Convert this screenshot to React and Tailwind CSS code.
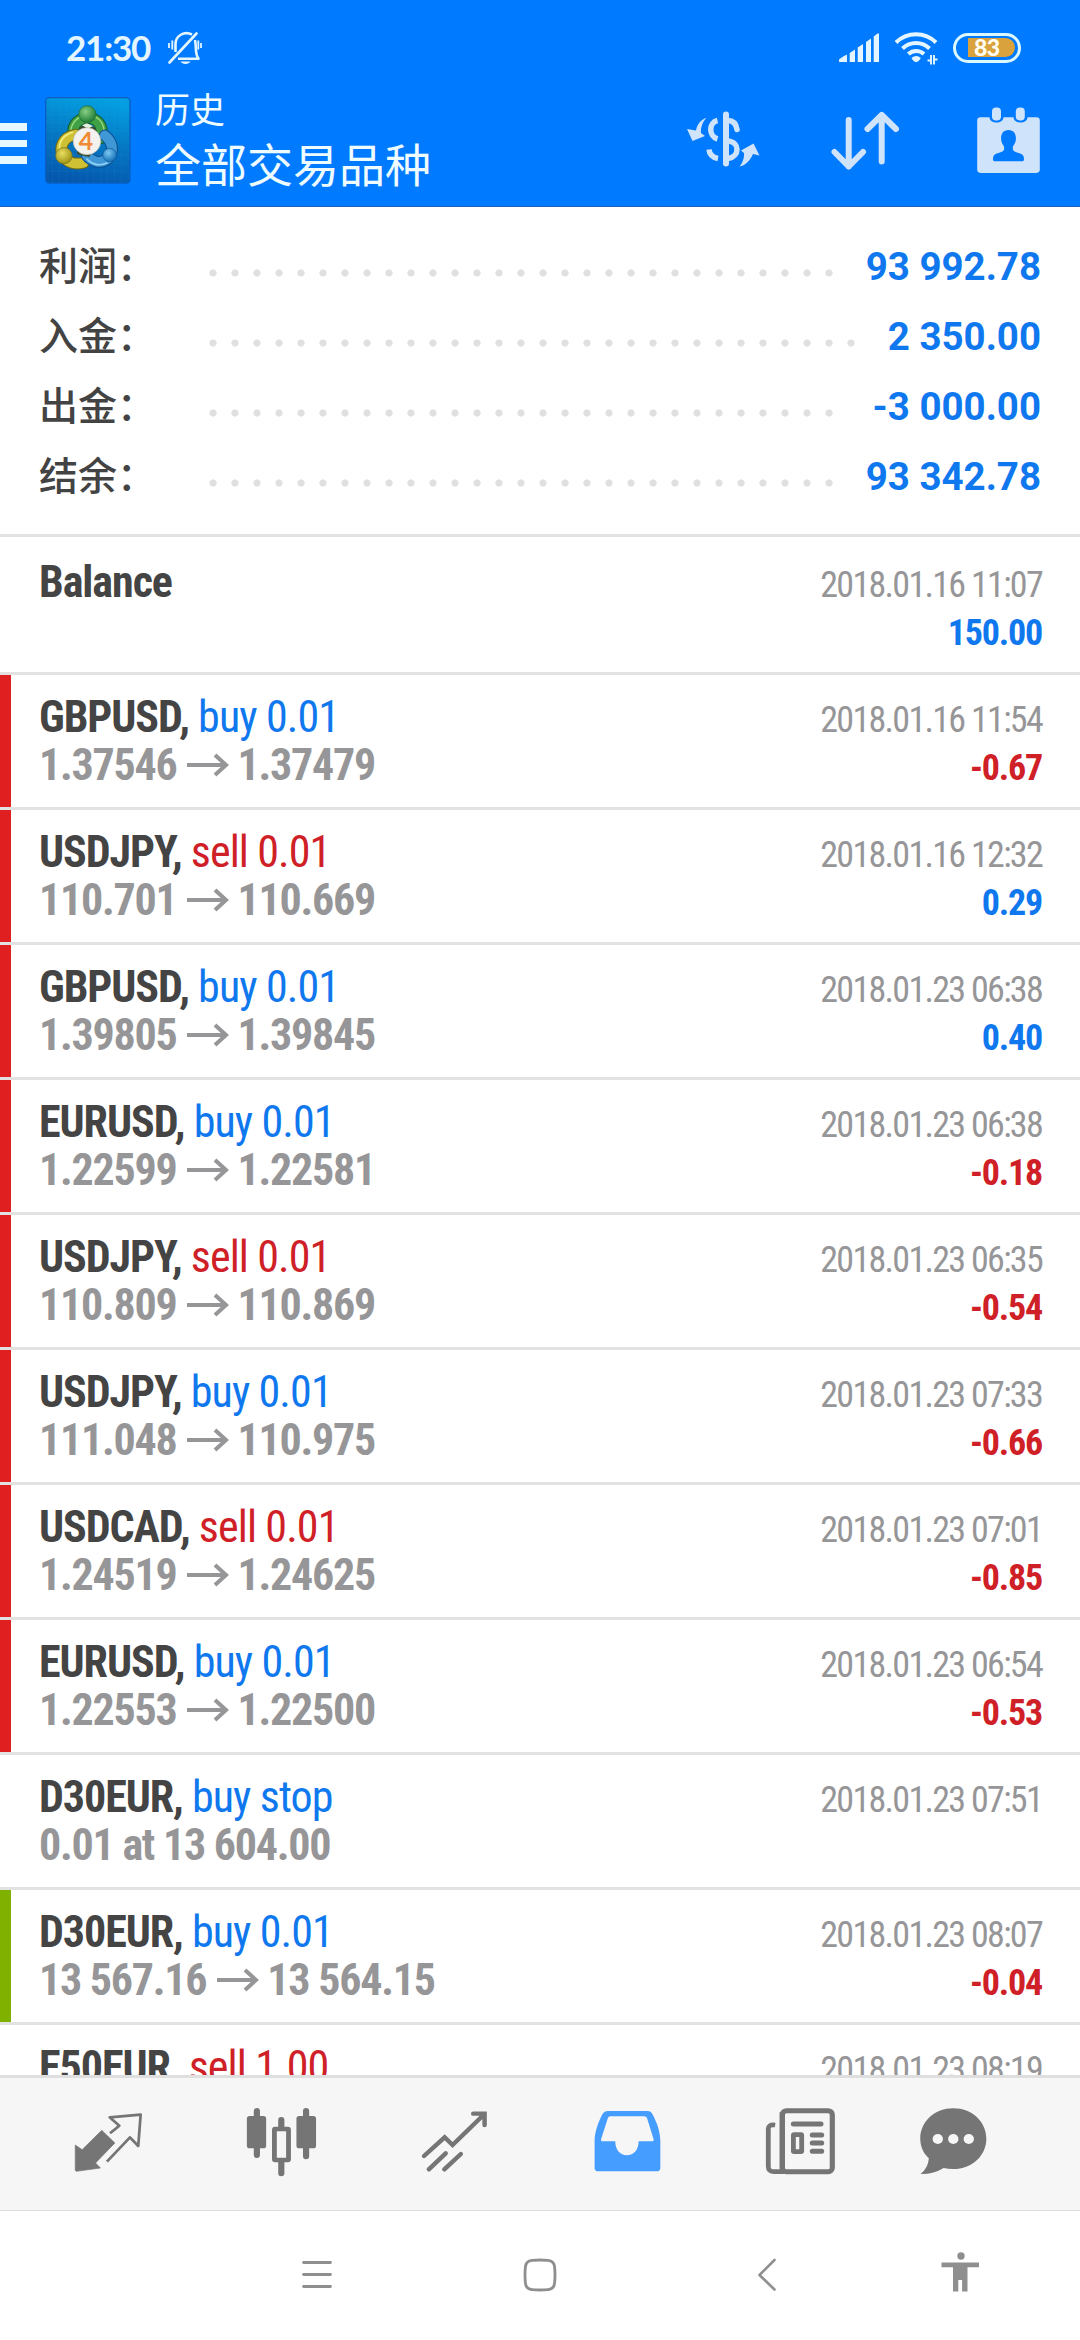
const summary = [
  { label: '利润：', value: '93 992.78' },
  { label: '入金：', value: '2 350.00' },
  { label: '出金：', value: '-3 000.00' },
  { label: '结余：', value: '93 342.78' },
]

const deals = [
  { symbol: 'Balance', time: '2018.01.16 11:07', profit: '150.00' },
  { symbol: 'GBPUSD', side: 'buy', volume: '0.01', from: '1.37546', to: '1.37479', time: '2018.01.16 11:54', profit: '-0.67', mark: 'red' },
  { symbol: 'USDJPY', side: 'sell', volume: '0.01', from: '110.701', to: '110.669', time: '2018.01.16 12:32', profit: '0.29', mark: 'red' },
  { symbol: 'GBPUSD', side: 'buy', volume: '0.01', from: '1.39805', to: '1.39845', time: '2018.01.23 06:38', profit: '0.40', mark: 'red' },
  { symbol: 'EURUSD', side: 'buy', volume: '0.01', from: '1.22599', to: '1.22581', time: '2018.01.23 06:38', profit: '-0.18', mark: 'red' },
  { symbol: 'USDJPY', side: 'sell', volume: '0.01', from: '110.809', to: '110.869', time: '2018.01.23 06:35', profit: '-0.54', mark: 'red' },
  { symbol: 'USDJPY', side: 'buy', volume: '0.01', from: '111.048', to: '110.975', time: '2018.01.23 07:33', profit: '-0.66', mark: 'red' },
  { symbol: 'USDCAD', side: 'sell', volume: '0.01', from: '1.24519', to: '1.24625', time: '2018.01.23 07:01', profit: '-0.85', mark: 'red' },
  { symbol: 'EURUSD', side: 'buy', volume: '0.01', from: '1.22553', to: '1.22500', time: '2018.01.23 06:54', profit: '-0.53', mark: 'red' },
  { symbol: 'D30EUR', side: 'buy', volume: 'stop', note: '0.01 at 13 604.00', time: '2018.01.23 07:51' },
  { symbol: 'D30EUR', side: 'buy', volume: '0.01', from: '13 567.16', to: '13 564.15', time: '2018.01.23 08:07', profit: '-0.04', mark: 'green' },
  { symbol: 'E50EUR', side: 'sell', volume: '1.00', time: '2018.01.23 08:19' },
]

const markColors = { red: 'bg-[#e02020]', green: 'bg-[#80b000]' }

function StatusBar() {
  return (
    <div className="flex h-[87px] items-center pt-2 pl-[66px] pr-[59px] text-[#e3f6ff]">
      <span className="w-[85px] font-['Lato',sans-serif] text-[35px] leading-none font-bold tracking-[-1.2px]">21:30</span>
      <svg className="ml-[17px]" width="34" height="34" viewBox="168 30 34 34" fill="none" stroke="currentColor" strokeWidth="2.6">
        <path d="M169.500 61.500 196.500 32.500" strokeLinecap="round" />
        <path d="M192 33.500C184 29.500 175.500 35 175.500 43v8" />
        <path d="M195 39c1.800 8-.5 13 3.500 18.800H178" strokeLinejoin="round" />
        <path d="M180.500 60.500h10c-1.500 3.200-8.500 3.200-10 0z" fill="currentColor" stroke="none" />
        <path d="M169 42v5M172.300 39.500v9M198.300 39.500v9M201 42v5" strokeWidth="1.800" />
      </svg>
      <svg className="ml-auto" width="42" height="32" viewBox="837 31 42 32" fill="currentColor">
        <path d="M838 61v-2q0-1.500 8-5.500v7.500zM848.700 52l5.300-3.400V61h-5.300zM856.700 46.500l5.300-3.500V61h-5.300zM865 41l5-3.500V61h-5zM872.700 35.500 876.500 32.500 878 32.500V61h-5.300z" />
      </svg>
      <svg className="ml-[14px]" width="45" height="36" viewBox="893 30 45 36" fill="none" stroke="currentColor" strokeWidth="4">
        <path d="M895 42.500C906 31.500 924 31.500 935 42.500M901.500 48.500c7.500-7.300 19.500-7.300 27 0M907.300 54c4.600-4 11.200-4 15.700 0" />
        <path d="M910.500 58c3-2.800 6.500-2.800 9.300 0-1 2-2.800 4-4.700 4s-3.700-2-4.600-4z" fill="currentColor" stroke="none" />
        <path d="M926.500 60.500h3.500V55M930 55v9.500M933 55v9.500M933 59.500h3.500" strokeWidth="1.900" />
      </svg>
      <div className="ml-[14px] flex h-[30px] w-[68px] items-center justify-end rounded-full border-[3px] border-[#dcf8ff] pr-[3px]">
        <div className="flex h-[19px] w-[47px] items-center rounded-r-full rounded-l-[2px] bg-[#d9a23c] pl-[6px] font-['Lato',sans-serif] text-[23px] leading-none font-black tracking-[-0.5px] text-[#fffdf2]">
          83
        </div>
      </div>
    </div>
  )
}

function Logo() {
  return (
    <svg className="ml-[18px]" width="86" height="87" viewBox="132 294 250 258" preserveAspectRatio="none">
      <defs>
        <linearGradient id="tile" x1="0.600" y1="0" x2="0.400" y2="1">
          <stop offset="0" stopColor="#049fe2" />
          <stop offset="0.550" stopColor="#0573bf" />
          <stop offset="1" stopColor="#0557ad" />
        </linearGradient>
        <radialGradient id="green" cx="0.400" cy="0.350" r="0.650">
          <stop offset="0" stopColor="#86d084" />
          <stop offset="1" stopColor="#217d36" />
        </radialGradient>
        <radialGradient id="yellow" cx="0.400" cy="0.350" r="0.650">
          <stop offset="0" stopColor="#e8dd5e" />
          <stop offset="1" stopColor="#a09418" />
        </radialGradient>
        <radialGradient id="blue" cx="0.400" cy="0.350" r="0.650">
          <stop offset="0" stopColor="#7cc8f2" />
          <stop offset="1" stopColor="#1672b8" />
        </radialGradient>
      </defs>
      <rect x="134" y="296" width="245" height="253" rx="10" fill="url(#tile)" stroke="#0a5fc0" strokeWidth="4" />
      <path d="M154 297v252M174 297v252M194 297v252M214 297v252M234 297v252M254 297v252M274 297v252M294 297v252M314 297v252M334 297v252M354 297v252M135 322h243M135 346h243M135 370h243M135 394h243M135 418h243M135 442h243M135 466h243M135 490h243M135 514h243" stroke="#37b6ee" strokeOpacity="0.150" strokeWidth="2" />
      <g fill="none" strokeLinecap="round">
        <path d="M214 404C212 374 230 358 255 356 282 356 302 376 297 415" stroke="#155c2c" strokeWidth="35" />
        <path d="M214 404C212 374 230 358 255 356 282 356 302 376 297 415" stroke="#3fa045" strokeWidth="29" />
        <path d="M207 396C208 372 226 350 255 348 284 349 302 366 304 396" stroke="#9ddc7a" strokeWidth="4" />
        <path d="M220 406C184 412 170 446 187 472 200 490 222 494 244 489" stroke="#6f6a15" strokeWidth="35" />
        <path d="M220 406C184 412 170 446 187 472 200 490 222 494 244 489" stroke="#cfc034" strokeWidth="29" />
        <path d="M212 399C184 408 174 426 174 446" stroke="#f4ec7c" strokeWidth="5" />
        <path d="M306 408C330 428 334 458 314 478 292 494 266 484 254 468" stroke="#0d4c8c" strokeWidth="35" />
        <path d="M306 408C330 428 334 458 314 478 292 494 266 484 254 468" stroke="#3f97d6" strokeWidth="29" />
        <path d="M254 478C268 494 290 500 312 490" stroke="#93d2f5" strokeWidth="5" />
      </g>
      <path d="M232 384l23-10 24 12 8 40-26 46-36-8z" fill="#3c4f2c" />
      <path d="M240 378l14-6 17 8-14 8z" fill="#e6f2dc" />
      <circle cx="255" cy="345" r="25" fill="url(#green)" stroke="#1b6a30" strokeWidth="2" />
      <circle cx="187" cy="468" r="24" fill="url(#yellow)" stroke="#77701a" strokeWidth="2" />
      <circle cx="320" cy="466" r="20" fill="url(#blue)" stroke="#0f5a9c" strokeWidth="2" />
      <circle cx="254" cy="425" r="40" fill="#f4f2ee" stroke="#b9b9b4" strokeWidth="2" />
      <text x="251" y="450" textAnchor="middle" fontFamily="Lato, sans-serif" fontSize="72" fontWeight="700" fill="#f08a35">4</text>
    </svg>
  )
}

function Toolbar() {
  return (
    <div className="flex h-[119px] items-start">
      <div className="mt-[36px] flex flex-col gap-[9px]">
        <span className="h-[7.500px] w-[27px] bg-[#e6f8ff]" />
        <span className="h-[7.500px] w-[27px] bg-[#e6f8ff]" />
        <span className="h-[7.500px] w-[27px] bg-[#e6f8ff]" />
      </div>
      <div className="mt-[10px]">
        <Logo />
      </div>
      <div className="ml-[24px] text-[#eefbff]">
        <p className="mt-[2px] text-[35px] leading-[46px]">历史</p>
        <p className="mt-[-1px] text-[46px] leading-[64px]">全部交易品种</p>
      </div>
      <div className="mt-[19px] mr-[39px] ml-auto flex items-start text-[#cfe3fb]">
        <svg width="76" height="70" viewBox="684 106 76 70" fill="none" stroke="currentColor" strokeWidth="5.500">
          <path d="M725 114.500v49" strokeLinecap="round" strokeWidth="6" />
          <path d="M716.500 120.500c-9 2-9 16 0 18.500M708 149.500c.5 5 3.500 8 9 9" />
          <path d="M727 120.500c5 0 8 3 9 9M727 141c12 1 12 15.500 0 17.500" strokeLinecap="round" />
          <path d="M705.500 118c-5 1-9.500 6-10.500 12.500l-9-1.500 5.500 12 12.500-5-4-3c-.5-6 2-12 5.500-15zM738.500 166.500c3-3 5-9 4.500-13.500l-3-2.500 12.500-7 6 12-6.500-1.500c-3 6.500-8 12-13.500 12.500z" fill="currentColor" stroke="none" />
        </svg>
        <svg className="ml-[68px]" width="72" height="70" viewBox="829 106 72 70" fill="none" stroke="currentColor" strokeWidth="6" strokeLinecap="round" strokeLinejoin="round">
          <path d="M848.700 120v46.500M834.500 152l14.200 14.500L863 152M881.700 161.500V115M867.500 129l14.200-14L896 129" />
        </svg>
        <svg className="ml-[75px]" width="65" height="70" viewBox="975.500 106 65 70" fill="currentColor">
          <path
            fillRule="evenodd"
            d="M980 117.300h9c0 7 14 7 14 0h10c0 7 14 7 14 0h9a3.300 3.300 0 0 1 3.300 3.300v49a3.300 3.300 0 0 1-3.300 3.300h-56a3.300 3.300 0 0 1-3.300-3.300v-49a3.300 3.300 0 0 1 3.300-3.300zM1008 130c-5.500 0-8 4.500-7.300 10 .3 3 1.800 4.500 2.800 6.500.8 3.500-.5 5-4 6-5 1.300-7 2.500-7 6.500 0 1.500.5 2.300 2 2.300h27c1.500 0 2-.8 2-2.300 0-4-2-5.200-7-6.500-3.500-1-4.800-2.500-4-6 1-2 2.500-3.500 2.800-6.500.7-5.500-1.800-10-7.300-10z"
          />
          <rect x="991.500" y="107.500" width="9" height="13" rx="4" />
          <rect x="1015.300" y="107.500" width="9" height="13" rx="4" />
        </svg>
      </div>
    </div>
  )
}

function SummaryRow({ label, value }) {
  return (
    <div className="flex h-[70px] items-stretch leading-[70px] font-medium">
      <span className="w-[163px] text-[39px] text-[#434343]">{label}</span>
      <span className="mt-[30px] h-[22px] flex-1 self-start bg-[radial-gradient(circle,#e0e0e0_3.200px,transparent_4px)] bg-[length:22px_22px] bg-repeat-x" />
      <span className="ml-[26px] text-[38.500px] font-bold text-[#1078ee]">{value}</span>
    </div>
  )
}

function DealRow({ deal }) {
  const { symbol, side, volume, from, to, note, time, profit, mark } = deal
  return (
    <div className="flex h-[135px] shrink-0 border-b-[3px] border-[#e2e2e2] font-['Roboto_Condensed','Roboto',sans-serif] [font-stretch:condensed]">
      <span className={`w-[11px] ${mark ? markColors[mark] : ''}`} />
      <div className="flex-1 pt-[18px] pl-7 text-[44px] leading-[48px]">
        <p className="font-bold tracking-[-1.05px] text-[#444444]">
          {symbol}
          {side && ', '}
          {side && <span className={`font-normal tracking-[-0.9px] ${side === 'buy' ? 'text-[#1078ee]' : 'text-[#d02027]'}`}>{side} {volume}</span>}
        </p>
        {note && <p className="font-bold tracking-[-1.25px] text-[#969698]">{note}</p>}
        {from && (
          <p className="flex items-center font-bold tracking-[-1.25px] text-[#969698]">
            {from}
            <svg className="mr-[8px] ml-[11px]" width="42" height="24" viewBox="0 0 42 24" fill="none" stroke="currentColor" strokeWidth="4">
              <path d="M0 12h39M28 2l11 10-11 10" />
            </svg>
            {to}
          </p>
        )}
      </div>
      <div className="pt-[21px] pr-[38px] text-right text-[36px] leading-[48px]">
        <p className="tracking-[-1.7px] text-[#969698]">{time}</p>
        {profit && <p className={`font-bold tracking-[-1.2px] ${profit.startsWith('-') ? 'text-[#d02027]' : 'text-[#1078ee]'}`}>{profit}</p>}
      </div>
    </div>
  )
}

function Tab({ box, children, active, className = 'w-[173px]' }) {
  return (
    <div className={`flex items-center justify-center ${active ? 'text-[#459dff]' : 'text-[#757575]'} ${className}`}>
      <svg width="82.600" height="76.700" viewBox={box} preserveAspectRatio="none" fill="currentColor">
        {children}
      </svg>
    </div>
  )
}

function TabBar() {
  return (
    <div className="flex h-[136px] border-t-[3px] border-b border-t-[#dfdfdf] border-b-[#dcdcdc] bg-[#f6f6f6] pl-[22px]">
      <Tab box="195 377 240 230">
        <path d="M296 450l38 38-56 60 14 15-70 10-3-3V494l20 14z" stroke="currentColor" strokeWidth="2" strokeLinejoin="round" />
        <path d="M320 459l27-23-28-25 90-8-7 94-24-26-67 73" fill="none" stroke="currentColor" strokeWidth="8" strokeLinejoin="round" />
      </Tab>
      <Tab box="696 377 240 230">
        <rect x="716" y="407" width="56" height="97" rx="8" />
        <rect x="860" y="407" width="57" height="97" rx="8" />
        <path d="M745 392v132M888 392v136M816 419v20M816 545v34" stroke="currentColor" strokeWidth="18" strokeLinecap="round" />
        <rect x="796" y="446" width="41" height="93" fill="none" stroke="currentColor" strokeWidth="14" rx="2" />
      </Tab>
      <Tab box="1198 377 240 230">
        <path d="M1230 527l60-56 23 23 92-92M1373 400h33v34M1244 567l49-48M1289 567l48-46" fill="none" stroke="currentColor" strokeWidth="13" strokeLinecap="round" />
      </Tab>
      <Tab box="134 377 240 230" active>
        <path fillRule="evenodd" d="M198 392h114c8 0 12 3 16 11 12 24 22 50 22 80v80c0 7-4 10-11 10H170c-7 0-11-3-11-10v-80c0-30 11-58 23-82 4-6 8-9 16-9zM206 408c-5 0-7 2-9 7l-19 61c-1 5 0 7 4 7h37c0 26 14 42 34 42s34-16 34-42h37c6 0 8-2 6-8l-18-60c-2-5-4-7-9-7z" />
      </Tab>
      <Tab box="638 377 240 230">
        <g fill="none" stroke="currentColor" strokeWidth="14">
          <rect x="706" y="391" width="145" height="183" rx="12" strokeWidth="15" />
          <path d="M685 434c-14-2-20 3-20 12v112c0 12 6 16 18 16h30" />
          <path d="M738 431h80M793 464h27M793 488h27M793 513h27" strokeLinecap="round" strokeWidth="15" />
          <rect x="738" y="463" width="24" height="51" rx="2" />
        </g>
        <path d="M698 395h14v180h-14z" />
      </Tab>
      <Tab box="1079 377 240 230" className="w-[132px]">
        <path d="M1199 384c54 0 96 40 96 91s-42 91-96 91q-16 0-28-3-30 19-67 18 22-18 24-47c-16-16-25-36-25-59 0-51 42-91 96-91z" />
        <g fill="#f6f6f6">
          <circle cx="1154" cy="476" r="15" />
          <circle cx="1199" cy="476" r="15" />
          <circle cx="1244" cy="476" r="15" />
        </g>
      </Tab>
    </div>
  )
}

function SystemNav() {
  return (
    <div className="flex flex-1 items-start bg-white pt-[39px] pl-[301px] text-[#8f8f8f]">
      <svg className="mt-2" width="32" height="32" viewBox="0 0 32 32" fill="none" stroke="currentColor" strokeWidth="2.800" strokeLinecap="round">
        <path d="M2.500 4.500h27M2.500 16.500h27M2.500 28.500h27" />
      </svg>
      <svg className="ml-[190px] mt-2" width="34" height="34" viewBox="0 0 34 34" fill="none" stroke="currentColor" strokeWidth="2.800">
        <path d="M9 2.400q8-.8 16 0 6 .6 6.600 6.600.8 8 0 16-.6 6-6.600 6.600-8 .8-16 0-6-.6-6.600-6.600-.8-8 0-16Q3 3 9 2.400z" />
      </svg>
      <svg className="ml-[200px] mt-2" width="22" height="34" viewBox="0 0 22 34" fill="none" stroke="currentColor" strokeWidth="2.600" strokeLinecap="round" strokeLinejoin="round">
        <path d="M17.500 2 2.500 17l15 14.500" />
      </svg>
      <svg className="ml-[161px]" width="40" height="44" viewBox="0 0 40 44" fill="currentColor">
        <circle cx="21" cy="6" r="3.700" />
        <path d="M1.500 12.500h37.500v4.800H27.500V41.500h-5.400V30h-3.800v11.500H13V17.300H1.500z" />
      </svg>
    </div>
  )
}

export default function App() {
  return (
    <div className="flex h-[2340px] w-[1080px] flex-col overflow-hidden bg-white font-['Roboto','Noto_Sans_CJK_SC',sans-serif]">
      <header className="h-[207px] border-b border-[#1a62b8] bg-[#007aff]">
        <StatusBar />
        <Toolbar />
      </header>
      <section className="h-[330px] border-b-[3px] border-[#e2e2e2] pt-[25px] pr-[39px] pl-[39px]">
        {summary.map((row) => (
          <SummaryRow key={row.label} {...row} />
        ))}
      </section>
      <main className="flex h-[1538px] flex-col overflow-hidden pt-[3px]">
        {deals.map((deal) => (
          <DealRow key={deal.time + deal.symbol} deal={deal} />
        ))}
      </main>
      <TabBar />
      <SystemNav />
    </div>
  )
}
